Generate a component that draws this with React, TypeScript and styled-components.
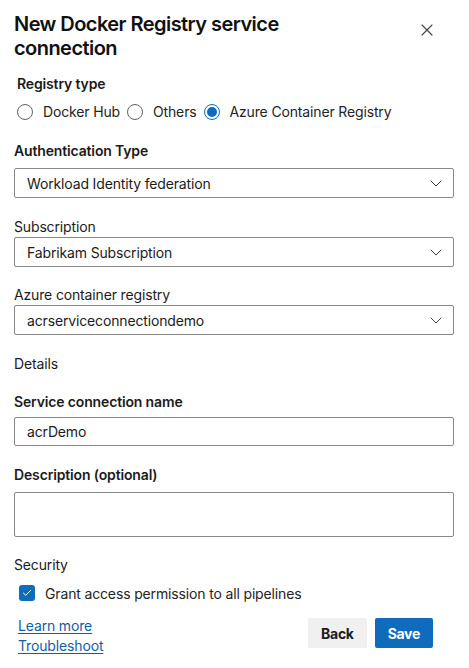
import React from "react";
import styled, { createGlobalStyle } from "styled-components";

const Global = createGlobalStyle`
  * { box-sizing: border-box; }
  body {
    margin: 0;
    background: #ffffff;
    color: #1b1b1b;
    font-family: Inter, "Noto Sans", "Liberation Sans", sans-serif;
    font-size: 14px;
    letter-spacing: -0.15px;
  }
`;

const Panel = styled.div`
  width: 469px;
  padding: 12px 15px 12px 14px;
  display: flex;
  flex-direction: column;
`;

const Header = styled.div`
  display: flex;
  justify-content: space-between;
  align-items: flex-start;
`;

const Title = styled.h1`
  margin: 0;
  max-width: 290px;
  font-size: 20px;
  font-weight: 600;
  line-height: 24px;
  letter-spacing: -0.55px;
  color: #111111;
`;

const CloseButton = styled.button`
  width: 32px;
  height: 32px;
  margin: 2px 11px 0 0;
  padding: 0;
  border: none;
  background: none;
  display: flex;
  align-items: center;
  justify-content: center;
  color: #424242;
  cursor: pointer;
`;

const Section = styled.div<{ $mt: number; $indent?: number }>`
  margin-top: ${(p) => p.$mt}px;
  padding-left: ${(p) => p.$indent ?? 0}px;
  display: flex;
  flex-direction: column;
`;

const Label = styled.div<{ $bold?: boolean; $gap?: number }>`
  font-size: 14px;
  line-height: 20px;
  font-weight: ${(p) => (p.$bold ? 600 : 400)};
  margin-bottom: ${(p) => p.$gap ?? 0}px;
  color: #1b1b1b;
`;

const RadioGroup = styled.div`
  display: flex;
  align-items: center;
  height: 20px;
  margin-top: 8px;
`;

const RadioOption = styled.label`
  display: flex;
  align-items: center;
  gap: 10px;
  margin-right: 7px;
  font-size: 14px;
  line-height: 20px;
  color: #242424;
`;

const RadioCircle = styled.span<{ $checked?: boolean }>`
  width: 16px;
  height: 16px;
  border-radius: 50%;
  border: 1px solid ${(p) => (p.$checked ? "#0f6cbd" : "#616161")};
  display: flex;
  align-items: center;
  justify-content: center;
  &::after {
    content: "";
    width: 10px;
    height: 10px;
    border-radius: 50%;
    background: ${(p) => (p.$checked ? "#0f6cbd" : "transparent")};
  }
`;

const Dropdown = styled.div`
  height: 30px;
  border: 1px solid #8a8886;
  border-radius: 2px;
  padding: 0 11px 0 12px;
  display: flex;
  align-items: center;
  justify-content: space-between;
  font-size: 14px;
  color: #1b1b1b;
`;

const TextBox = styled.div<{ $h: number; $mt: number }>`
  height: ${(p) => p.$h}px;
  margin-top: ${(p) => p.$mt}px;
  border: 1px solid #8a8886;
  border-radius: 2px;
  padding: 0 12px;
  display: flex;
  align-items: center;
  font-size: 14px;
  color: #1b1b1b;
`;

const CheckRow = styled.label`
  display: flex;
  align-items: center;
  gap: 10px;
  margin-top: 8px;
  padding-left: 5px;
  height: 20px;
  font-size: 14px;
  color: #242424;
`;

const CheckBox = styled.span`
  width: 16px;
  height: 16px;
  border-radius: 3px;
  background: #0f6cbd;
  display: flex;
  align-items: center;
  justify-content: center;
`;

const Footer = styled.div`
  margin-top: 13px;
  display: flex;
  justify-content: space-between;
  align-items: flex-start;
`;

const Links = styled.div`
  display: flex;
  flex-direction: column;
  padding-left: 4px;
`;

const Link = styled.a`
  font-size: 14px;
  line-height: 20px;
  color: #115ea3;
  text-decoration: underline;
  text-underline-offset: 2px;
`;

const Buttons = styled.div`
  display: flex;
  gap: 8px;
  margin: 2px 21px 0 0;
`;

const Button = styled.button<{ $primary?: boolean }>`
  height: 30px;
  padding: 0 13px;
  border: none;
  border-radius: 2px;
  font-family: inherit;
  font-size: 14px;
  font-weight: 700;
  letter-spacing: -0.3px;
  background: ${(p) => (p.$primary ? "#0f6cbd" : "#f0f0f0")};
  color: ${(p) => (p.$primary ? "#ffffff" : "#1b1b1b")};
`;

const Chevron = () => (
  <svg width="12" height="7" viewBox="0 0 12 7" fill="none">
    <path d="M1 1L6 6L11 1" stroke="#424242" strokeWidth="1" strokeLinecap="round" strokeLinejoin="round" />
  </svg>
);

const Select = ({ value }: { value: string }) => (
  <Dropdown>
    <span>{value}</span>
    <Chevron />
  </Dropdown>
);

export default function App() {
  return (
    <>
      <Global />
      <Panel>
        <Header>
          <Title>New Docker Registry service connection</Title>
          <CloseButton aria-label="Close">
            <svg width="12" height="12" viewBox="0 0 12 12" fill="none">
              <path d="M1 1L11 11M11 1L1 11" stroke="#424242" strokeWidth="1.1" strokeLinecap="round" />
            </svg>
          </CloseButton>
        </Header>

        <Section $mt={14} $indent={3}>
          <Label $bold>Registry type</Label>
          <RadioGroup>
            <RadioOption>
              <RadioCircle />
              Docker Hub
            </RadioOption>
            <RadioOption>
              <RadioCircle />
              Others
            </RadioOption>
            <RadioOption>
              <RadioCircle $checked />
              Azure Container Registry
            </RadioOption>
          </RadioGroup>
        </Section>

        <Section $mt={19}>
          <Label $bold $gap={7}>Authentication Type</Label>
          <Select value="Workload Identity federation" />
        </Section>

        <Section $mt={19}>
          <Label>Subscription</Label>
          <Select value="Fabrikam Subscription" />
        </Section>

        <Section $mt={18}>
          <Label>Azure container registry</Label>
          <Select value="acrserviceconnectiondemo" />
        </Section>

        <Section $mt={19}>
          <Label>Details</Label>
        </Section>

        <Section $mt={18}>
          <Label $bold>Service connection name</Label>
          <TextBox $h={29} $mt={5}>acrDemo</TextBox>
        </Section>

        <Section $mt={19}>
          <Label $bold>Description (optional)</Label>
          <TextBox $h={45} $mt={7} />
        </Section>

        <Section $mt={18}>
          <Label>Security</Label>
          <CheckRow>
            <CheckBox>
              <svg width="10" height="8" viewBox="0 0 10 8" fill="none">
                <path d="M1.5 4.2L3.8 6.3L8.5 1.5" stroke="#ffffff" strokeWidth="1" strokeLinecap="round" strokeLinejoin="round" />
              </svg>
            </CheckBox>
            Grant access permission to all pipelines
          </CheckRow>
        </Section>

        <Footer>
          <Links>
            <Link href="#">Learn more</Link>
            <Link href="#">Troubleshoot</Link>
          </Links>
          <Buttons>
            <Button>Back</Button>
            <Button $primary>Save</Button>
          </Buttons>
        </Footer>
      </Panel>
    </>
  );
}
